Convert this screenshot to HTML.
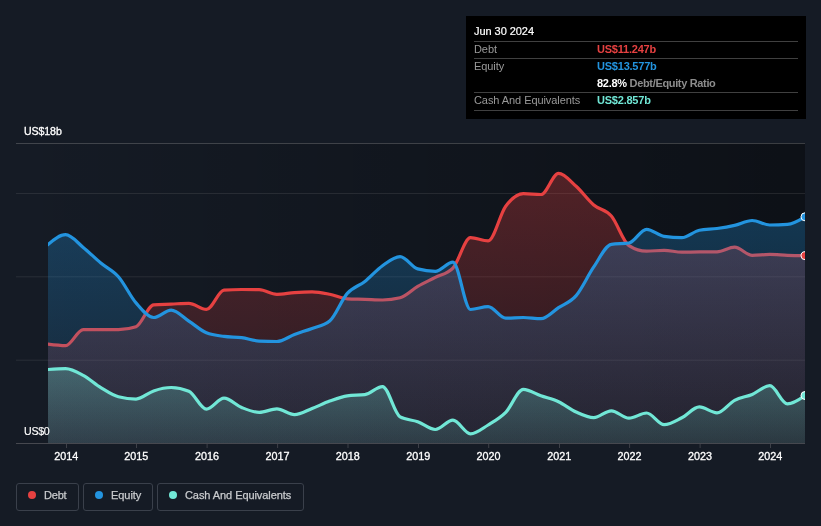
<!DOCTYPE html>
<html><head><meta charset="utf-8"><title>Debt to Equity History</title>
<style>
html,body{margin:0;padding:0;}
body{width:821px;height:526px;background:#151b25;overflow:hidden;position:relative;font-family:"Liberation Sans",sans-serif;}
svg{position:absolute;left:0;top:0;}
.txt{position:absolute;left:0;top:0;width:821px;height:526px;will-change:transform;}
.ax{position:absolute;color:#fff;font-size:10.6px;line-height:12px;white-space:nowrap;-webkit-text-stroke:0.3px #fff;}
.yl{position:absolute;top:449.6px;width:40px;text-align:center;color:#fff;font-size:10.8px;line-height:12px;-webkit-text-stroke:0.3px #fff;}
.tip{position:absolute;left:466px;top:16px;width:340px;height:103px;background:#000;}
.tip div{position:absolute;white-space:nowrap;font-size:11px;line-height:12px;}
.tip .hl{left:8px;width:324px;height:1px;background:#404040;}
.tip .lb{left:8px;letter-spacing:-0.07px;color:#999999;}
.tip .v{left:131px;font-weight:bold;letter-spacing:-0.22px;}
.leg{position:absolute;top:483px;height:26px;border:1px solid #3a404b;border-radius:3px;box-sizing:content-box;}
.leg i{position:absolute;left:11px;top:7.2px;width:8px;height:8px;border-radius:50%;}
.leg span{position:absolute;left:27px;top:4.8px;font-size:11px;line-height:12px;color:#c9cbce;white-space:nowrap;letter-spacing:-0.2px;-webkit-text-stroke:0.25px #c9cbce;}
</style></head><body>
<svg width="821" height="526" viewBox="0 0 821 526">
<defs>
<linearGradient id="pg" x1="0" x2="1" y1="0" y2="0"><stop offset="0" stop-color="#000" stop-opacity="0"/><stop offset="1" stop-color="#000" stop-opacity="0.39"/></linearGradient>
<linearGradient id="gd" x1="0" x2="0" y1="173" y2="443" gradientUnits="userSpaceOnUse"><stop offset="0" stop-color="#e64141" stop-opacity="0.31"/><stop offset="1" stop-color="#e64141" stop-opacity="0.095"/></linearGradient>
<linearGradient id="ge" x1="0" x2="0" y1="217" y2="443" gradientUnits="userSpaceOnUse"><stop offset="0" stop-color="#2394df" stop-opacity="0.29"/><stop offset="1" stop-color="#2394df" stop-opacity="0.09"/></linearGradient>
<linearGradient id="gc" x1="0" x2="0" y1="368" y2="443" gradientUnits="userSpaceOnUse"><stop offset="0" stop-color="#71e7d6" stop-opacity="0.28"/><stop offset="1" stop-color="#71e7d6" stop-opacity="0.12"/></linearGradient>
<clipPath id="cp"><rect x="48" y="140" width="757" height="303.5"/></clipPath>
</defs>
<rect x="16" y="143" width="789" height="300.5" fill="url(#pg)"/>
<g>
<rect x="16" y="193" width="789" height="1" fill="rgba(160,160,160,0.15)"/>
<rect x="16" y="276.33" width="789" height="1" fill="rgba(160,160,160,0.15)"/>
<rect x="16" y="359.67" width="789" height="1" fill="rgba(160,160,160,0.15)"/>
<rect x="16" y="143" width="789" height="1" fill="rgba(160,160,160,0.32)"/>
</g>
<g clip-path="url(#cp)">
<path d="M44.00,343.69L48.00,344.20C53.87,344.95,59.74,345.70,65.60,345.70C71.47,345.70,77.34,329.60,83.21,329.60C89.08,329.60,94.95,329.60,100.81,329.60C106.68,329.60,112.55,329.60,118.42,329.60C124.29,329.60,130.16,328.63,136.02,326.70C141.89,324.77,147.76,305.27,153.63,304.80C159.50,304.33,165.36,304.35,171.23,304.10C177.10,303.85,182.97,303.30,188.84,303.30C194.71,303.30,200.57,309.40,206.44,309.40C212.31,309.40,218.18,290.67,224.05,290.20C229.91,289.73,235.78,289.50,241.65,289.50C247.52,289.50,253.39,289.57,259.26,289.70C265.12,289.83,270.99,294.30,276.86,294.30C282.73,294.30,288.60,293.00,294.47,292.60C300.33,292.20,306.20,291.90,312.07,291.90C317.94,291.90,323.81,293.15,329.67,294.30C335.54,295.45,341.41,298.47,347.28,298.80C353.15,299.13,359.02,299.10,364.88,299.30C370.75,299.50,376.62,300.00,382.49,300.00C388.36,300.00,394.22,299.27,400.09,297.80C405.96,296.33,411.83,289.80,417.70,286.40C423.57,283.00,429.43,280.45,435.30,277.40C441.17,274.35,447.04,274.30,452.91,268.10C458.78,261.90,464.64,237.70,470.51,237.70C476.38,237.70,482.25,240.90,488.12,240.90C493.98,240.90,499.85,214.08,505.72,206.20C511.59,198.32,517.46,193.60,523.33,193.60C529.19,193.60,535.06,194.50,540.93,194.50C546.80,194.50,552.67,173.40,558.53,173.40C564.40,173.40,570.27,181.03,576.14,186.30C582.01,191.57,587.88,200.05,593.74,205.00C599.61,209.95,605.48,209.23,611.35,216.00C617.22,222.77,623.09,241.87,628.95,245.60C634.82,249.33,640.69,251.20,646.56,251.20C652.43,251.20,658.29,250.30,664.16,250.30C670.03,250.30,675.90,252.20,681.77,252.20C687.64,252.20,693.50,251.90,699.37,251.90C705.24,251.90,711.11,251.90,716.98,251.90C722.84,251.90,728.71,247.20,734.58,247.20C740.45,247.20,746.32,255.30,752.19,255.30C758.05,255.30,763.92,254.40,769.79,254.40C775.66,254.40,781.53,255.08,787.40,255.30C793.26,255.52,799.13,255.61,805.00,255.70L805.00,443.30L44.00,443.30Z" fill="url(#gd)"/>
<path d="M44.00,343.69L48.00,344.20C53.87,344.95,59.74,345.70,65.60,345.70C71.47,345.70,77.34,329.60,83.21,329.60C89.08,329.60,94.95,329.60,100.81,329.60C106.68,329.60,112.55,329.60,118.42,329.60C124.29,329.60,130.16,328.63,136.02,326.70C141.89,324.77,147.76,305.27,153.63,304.80C159.50,304.33,165.36,304.35,171.23,304.10C177.10,303.85,182.97,303.30,188.84,303.30C194.71,303.30,200.57,309.40,206.44,309.40C212.31,309.40,218.18,290.67,224.05,290.20C229.91,289.73,235.78,289.50,241.65,289.50C247.52,289.50,253.39,289.57,259.26,289.70C265.12,289.83,270.99,294.30,276.86,294.30C282.73,294.30,288.60,293.00,294.47,292.60C300.33,292.20,306.20,291.90,312.07,291.90C317.94,291.90,323.81,293.15,329.67,294.30C335.54,295.45,341.41,298.47,347.28,298.80C353.15,299.13,359.02,299.10,364.88,299.30C370.75,299.50,376.62,300.00,382.49,300.00C388.36,300.00,394.22,299.27,400.09,297.80C405.96,296.33,411.83,289.80,417.70,286.40C423.57,283.00,429.43,280.45,435.30,277.40C441.17,274.35,447.04,274.30,452.91,268.10C458.78,261.90,464.64,237.70,470.51,237.70C476.38,237.70,482.25,240.90,488.12,240.90C493.98,240.90,499.85,214.08,505.72,206.20C511.59,198.32,517.46,193.60,523.33,193.60C529.19,193.60,535.06,194.50,540.93,194.50C546.80,194.50,552.67,173.40,558.53,173.40C564.40,173.40,570.27,181.03,576.14,186.30C582.01,191.57,587.88,200.05,593.74,205.00C599.61,209.95,605.48,209.23,611.35,216.00C617.22,222.77,623.09,241.87,628.95,245.60C634.82,249.33,640.69,251.20,646.56,251.20C652.43,251.20,658.29,250.30,664.16,250.30C670.03,250.30,675.90,252.20,681.77,252.20C687.64,252.20,693.50,251.90,699.37,251.90C705.24,251.90,711.11,251.90,716.98,251.90C722.84,251.90,728.71,247.20,734.58,247.20C740.45,247.20,746.32,255.30,752.19,255.30C758.05,255.30,763.92,254.40,769.79,254.40C775.66,254.40,781.53,255.08,787.40,255.30C793.26,255.52,799.13,255.61,805.00,255.70" fill="none" stroke="#e64141" stroke-width="3.2" stroke-linejoin="round"/>
<path d="M44.00,247.84L48.00,244.50C53.87,239.60,59.74,234.70,65.60,234.70C71.47,234.70,77.34,242.67,83.21,247.40C89.08,252.13,94.95,258.22,100.81,263.10C106.68,267.98,112.55,270.07,118.42,276.70C124.29,283.33,130.16,296.10,136.02,302.90C141.89,309.70,147.76,317.50,153.63,317.50C159.50,317.50,165.36,310.20,171.23,310.20C177.10,310.20,182.97,317.33,188.84,321.10C194.71,324.87,200.57,330.40,206.44,332.80C212.31,335.20,218.18,335.58,224.05,336.40C229.91,337.22,235.78,336.92,241.65,337.70C247.52,338.48,253.39,340.83,259.26,341.10C265.12,341.37,270.99,341.50,276.86,341.50C282.73,341.50,288.60,336.68,294.47,334.50C300.33,332.32,306.20,330.63,312.07,328.40C317.94,326.17,323.81,325.97,329.67,321.10C335.54,316.23,341.41,300.00,347.28,293.40C353.15,286.80,359.02,286.12,364.88,281.50C370.75,276.88,376.62,269.83,382.49,265.70C388.36,261.57,394.22,256.70,400.09,256.70C405.96,256.70,411.83,267.30,417.70,268.90C423.57,270.50,429.43,271.30,435.30,271.30C441.17,271.30,447.04,262.10,452.91,262.10C458.78,262.10,464.64,309.50,470.51,309.50C476.38,309.50,482.25,306.60,488.12,306.60C493.98,306.60,499.85,318.20,505.72,318.20C511.59,318.20,517.46,317.50,523.33,317.50C529.19,317.50,535.06,318.70,540.93,318.70C546.80,318.70,552.67,311.55,558.53,307.70C564.40,303.85,570.27,302.40,576.14,295.60C582.01,288.80,587.88,275.45,593.74,266.90C599.61,258.35,605.48,245.17,611.35,244.30C617.22,243.43,623.09,243.87,628.95,243.00C634.82,242.13,640.69,229.30,646.56,229.30C652.43,229.30,658.29,235.53,664.16,236.40C670.03,237.27,675.90,237.70,681.77,237.70C687.64,237.70,693.50,231.33,699.37,230.20C705.24,229.07,711.11,229.30,716.98,228.50C722.84,227.70,728.71,226.73,734.58,225.40C740.45,224.07,746.32,220.50,752.19,220.50C758.05,220.50,763.92,225.00,769.79,225.00C775.66,225.00,781.53,224.80,787.40,224.40C793.26,224.00,799.13,220.40,805.00,216.80L805.00,443.30L44.00,443.30Z" fill="url(#ge)"/>
<path d="M44.00,247.84L48.00,244.50C53.87,239.60,59.74,234.70,65.60,234.70C71.47,234.70,77.34,242.67,83.21,247.40C89.08,252.13,94.95,258.22,100.81,263.10C106.68,267.98,112.55,270.07,118.42,276.70C124.29,283.33,130.16,296.10,136.02,302.90C141.89,309.70,147.76,317.50,153.63,317.50C159.50,317.50,165.36,310.20,171.23,310.20C177.10,310.20,182.97,317.33,188.84,321.10C194.71,324.87,200.57,330.40,206.44,332.80C212.31,335.20,218.18,335.58,224.05,336.40C229.91,337.22,235.78,336.92,241.65,337.70C247.52,338.48,253.39,340.83,259.26,341.10C265.12,341.37,270.99,341.50,276.86,341.50C282.73,341.50,288.60,336.68,294.47,334.50C300.33,332.32,306.20,330.63,312.07,328.40C317.94,326.17,323.81,325.97,329.67,321.10C335.54,316.23,341.41,300.00,347.28,293.40C353.15,286.80,359.02,286.12,364.88,281.50C370.75,276.88,376.62,269.83,382.49,265.70C388.36,261.57,394.22,256.70,400.09,256.70C405.96,256.70,411.83,267.30,417.70,268.90C423.57,270.50,429.43,271.30,435.30,271.30C441.17,271.30,447.04,262.10,452.91,262.10C458.78,262.10,464.64,309.50,470.51,309.50C476.38,309.50,482.25,306.60,488.12,306.60C493.98,306.60,499.85,318.20,505.72,318.20C511.59,318.20,517.46,317.50,523.33,317.50C529.19,317.50,535.06,318.70,540.93,318.70C546.80,318.70,552.67,311.55,558.53,307.70C564.40,303.85,570.27,302.40,576.14,295.60C582.01,288.80,587.88,275.45,593.74,266.90C599.61,258.35,605.48,245.17,611.35,244.30C617.22,243.43,623.09,243.87,628.95,243.00C634.82,242.13,640.69,229.30,646.56,229.30C652.43,229.30,658.29,235.53,664.16,236.40C670.03,237.27,675.90,237.70,681.77,237.70C687.64,237.70,693.50,231.33,699.37,230.20C705.24,229.07,711.11,229.30,716.98,228.50C722.84,227.70,728.71,226.73,734.58,225.40C740.45,224.07,746.32,220.50,752.19,220.50C758.05,220.50,763.92,225.00,769.79,225.00C775.66,225.00,781.53,224.80,787.40,224.40C793.26,224.00,799.13,220.40,805.00,216.80" fill="none" stroke="#2394df" stroke-width="3.2" stroke-linejoin="round"/>
<path d="M44.00,369.77L48.00,369.50C53.87,369.10,59.74,368.70,65.60,368.70C71.47,368.70,77.34,372.15,83.21,375.30C89.08,378.45,94.95,384.02,100.81,387.60C106.68,391.18,112.55,395.27,118.42,396.80C124.29,398.33,130.16,399.10,136.02,399.10C141.89,399.10,147.76,392.83,153.63,390.90C159.50,388.97,165.36,387.50,171.23,387.50C177.10,387.50,182.97,388.73,188.84,391.20C194.71,393.67,200.57,409.10,206.44,409.10C212.31,409.10,218.18,398.10,224.05,398.10C229.91,398.10,235.78,405.12,241.65,407.50C247.52,409.88,253.39,412.40,259.26,412.40C265.12,412.40,270.99,408.90,276.86,408.90C282.73,408.90,288.60,414.70,294.47,414.70C300.33,414.70,306.20,410.77,312.07,408.50C317.94,406.23,323.81,403.22,329.67,401.10C335.54,398.98,341.41,396.60,347.28,395.80C353.15,395.00,359.02,395.40,364.88,394.60C370.75,393.80,376.62,386.60,382.49,386.60C388.36,386.60,394.22,413.70,400.09,416.90C405.96,420.10,411.83,419.60,417.70,421.70C423.57,423.80,429.43,429.50,435.30,429.50C441.17,429.50,447.04,420.20,452.91,420.20C458.78,420.20,464.64,433.80,470.51,433.80C476.38,433.80,482.25,428.57,488.12,425.00C493.98,421.43,499.85,418.33,505.72,412.40C511.59,406.47,517.46,389.40,523.33,389.40C529.19,389.40,535.06,393.75,540.93,395.80C546.80,397.85,552.67,399.00,558.53,401.70C564.40,404.40,570.27,409.35,576.14,412.00C582.01,414.65,587.88,417.60,593.74,417.60C599.61,417.60,605.48,410.80,611.35,410.80C617.22,410.80,623.09,418.20,628.95,418.20C634.82,418.20,640.69,413.00,646.56,413.00C652.43,413.00,658.29,424.70,664.16,424.70C670.03,424.70,675.90,420.77,681.77,417.80C687.64,414.83,693.50,406.90,699.37,406.90C705.24,406.90,711.11,412.80,716.98,412.80C722.84,412.80,728.71,403.37,734.58,400.30C740.45,397.23,746.32,396.83,752.19,394.40C758.05,391.97,763.92,385.70,769.79,385.70C775.66,385.70,781.53,403.90,787.40,403.90C793.26,403.90,799.13,399.70,805.00,395.50L805.00,443.30L44.00,443.30Z" fill="url(#gc)"/>
<path d="M44.00,369.77L48.00,369.50C53.87,369.10,59.74,368.70,65.60,368.70C71.47,368.70,77.34,372.15,83.21,375.30C89.08,378.45,94.95,384.02,100.81,387.60C106.68,391.18,112.55,395.27,118.42,396.80C124.29,398.33,130.16,399.10,136.02,399.10C141.89,399.10,147.76,392.83,153.63,390.90C159.50,388.97,165.36,387.50,171.23,387.50C177.10,387.50,182.97,388.73,188.84,391.20C194.71,393.67,200.57,409.10,206.44,409.10C212.31,409.10,218.18,398.10,224.05,398.10C229.91,398.10,235.78,405.12,241.65,407.50C247.52,409.88,253.39,412.40,259.26,412.40C265.12,412.40,270.99,408.90,276.86,408.90C282.73,408.90,288.60,414.70,294.47,414.70C300.33,414.70,306.20,410.77,312.07,408.50C317.94,406.23,323.81,403.22,329.67,401.10C335.54,398.98,341.41,396.60,347.28,395.80C353.15,395.00,359.02,395.40,364.88,394.60C370.75,393.80,376.62,386.60,382.49,386.60C388.36,386.60,394.22,413.70,400.09,416.90C405.96,420.10,411.83,419.60,417.70,421.70C423.57,423.80,429.43,429.50,435.30,429.50C441.17,429.50,447.04,420.20,452.91,420.20C458.78,420.20,464.64,433.80,470.51,433.80C476.38,433.80,482.25,428.57,488.12,425.00C493.98,421.43,499.85,418.33,505.72,412.40C511.59,406.47,517.46,389.40,523.33,389.40C529.19,389.40,535.06,393.75,540.93,395.80C546.80,397.85,552.67,399.00,558.53,401.70C564.40,404.40,570.27,409.35,576.14,412.00C582.01,414.65,587.88,417.60,593.74,417.60C599.61,417.60,605.48,410.80,611.35,410.80C617.22,410.80,623.09,418.20,628.95,418.20C634.82,418.20,640.69,413.00,646.56,413.00C652.43,413.00,658.29,424.70,664.16,424.70C670.03,424.70,675.90,420.77,681.77,417.80C687.64,414.83,693.50,406.90,699.37,406.90C705.24,406.90,711.11,412.80,716.98,412.80C722.84,412.80,728.71,403.37,734.58,400.30C740.45,397.23,746.32,396.83,752.19,394.40C758.05,391.97,763.92,385.70,769.79,385.70C775.66,385.70,781.53,403.90,787.40,403.90C793.26,403.90,799.13,399.70,805.00,395.50" fill="none" stroke="#71e7d6" stroke-width="3.2" stroke-linejoin="round"/>
<circle cx="805" cy="255.7" r="4" fill="#e64141" stroke="#fff" stroke-width="1"/>
<circle cx="805" cy="216.8" r="4" fill="#2394df" stroke="#fff" stroke-width="1"/>
<circle cx="805" cy="395.5" r="4" fill="#71e7d6" stroke="#fff" stroke-width="1"/>
</g>
<rect x="16" y="443" width="789" height="1" fill="#46484f" shape-rendering="crispEdges"/>
<rect x="66.0" y="444" width="1" height="4" fill="#3d4048"/><rect x="136.0" y="444" width="1" height="4" fill="#3d4048"/><rect x="206.6" y="444" width="1" height="4" fill="#3d4048"/><rect x="277.1" y="444" width="1" height="4" fill="#3d4048"/><rect x="347.5" y="444" width="1" height="4" fill="#3d4048"/><rect x="418.0" y="444" width="1" height="4" fill="#3d4048"/><rect x="488.2" y="444" width="1" height="4" fill="#3d4048"/><rect x="559.0" y="444" width="1" height="4" fill="#3d4048"/><rect x="629.1" y="444" width="1" height="4" fill="#3d4048"/><rect x="699.6" y="444" width="1" height="4" fill="#3d4048"/><rect x="770.0" y="444" width="1" height="4" fill="#3d4048"/>
</svg>
<div class="txt">
<div class="ax" style="left:24px;top:124.7px;letter-spacing:-0.1px">US$18b</div>
<div class="ax" style="left:24px;top:424.7px;letter-spacing:-0.25px;-webkit-text-stroke:0.15px #fff">US$0</div>
<div class="yl" style="left:46.3px">2014</div><div class="yl" style="left:116.3px">2015</div><div class="yl" style="left:186.9px">2016</div><div class="yl" style="left:257.4px">2017</div><div class="yl" style="left:327.8px">2018</div><div class="yl" style="left:398.3px">2019</div><div class="yl" style="left:468.5px">2020</div><div class="yl" style="left:539.3px">2021</div><div class="yl" style="left:609.4px">2022</div><div class="yl" style="left:679.9px">2023</div><div class="yl" style="left:750.3px">2024</div>
<div class="tip">
<div style="left:8px;top:8.5px;color:#fff;-webkit-text-stroke:0.2px #fff;letter-spacing:-0.05px">Jun 30 2024</div>
<div class="hl" style="top:25px"></div>
<div class="lb" style="top:27px">Debt</div><div class="v" style="top:27px;color:#e64141">US$11.247b</div>
<div class="hl" style="top:42px"></div>
<div class="lb" style="top:44px">Equity</div><div class="v" style="top:44px;color:#2394df">US$13.577b</div>
<div class="v" style="top:61px;color:#fff"><span style="letter-spacing:-0.3px">82.8%</span><span style="color:#8d8d8d;letter-spacing:-0.34px;margin-left:2.9px">Debt/Equity Ratio</span></div>
<div class="hl" style="top:76px"></div>
<div class="lb" style="top:78px">Cash And Equivalents</div><div class="v" style="top:78px;color:#71e7d6">US$2.857b</div>
<div class="hl" style="top:94px"></div>
</div>
<div class="leg" style="left:16px;width:61px"><i style="background:#e64141"></i><span>Debt</span></div>
<div class="leg" style="left:83px;width:68px"><i style="background:#2394df"></i><span style="letter-spacing:-0.04px">Equity</span></div>
<div class="leg" style="left:157px;width:145px"><i style="background:#71e7d6"></i><span style="letter-spacing:-0.07px">Cash And Equivalents</span></div>
</div>
</body></html>
